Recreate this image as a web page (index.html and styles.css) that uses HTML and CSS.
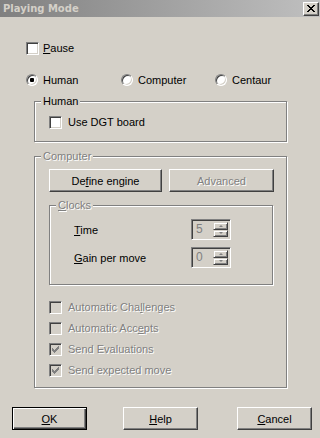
FILE: index.html
```html
<!DOCTYPE html>
<html lang="en">
<head>
    <meta charset="UTF-8">
    <title>Playing Mode</title>
    <link rel="stylesheet" href="styles.css">
</head>
<body>
    <div class="window">
        <div class="titlebar">
            <span class="title">Playing Mode</span>
            <span class="close-btn">
                <svg width="8" height="7" viewBox="0 0 8 7" shape-rendering="crispEdges"><path d="M0 0h2v1h1v1h2V1h1V0h2v1H7v1H6v1H5v1h1v1h1v1h1v1H6V6H5V5H3v1H2v1H0V6h1V5h1V4h1V3H2V2H1V1H0z" fill="#000"/></svg>
            </span>
        </div>

        <div class="content">
            <label class="check pause">
                <span class="box"></span>
                <span><u>P</u>ause</span>
            </label>

            <div class="radio-row">
                <label class="radio"><span class="ring"><span class="dot"></span></span>Human</label>
                <label class="radio"><span class="ring"></span>Computer</label>
                <label class="radio"><span class="ring"></span>Centaur</label>
            </div>

            <fieldset class="group human">
                <legend>Human</legend>
                <div class="group-body">
                    <label class="check">
                        <span class="box"></span>
                        <span>Use DGT board</span>
                    </label>
                </div>
            </fieldset>

            <fieldset class="group computer">
                <legend class="disabled">Computer</legend>
                <div class="group-body">
                    <div class="engine-buttons">
                        <button class="btn engine">De<u>f</u>ine engine</button>
                        <button class="btn advanced disabled">Advanced</button>
                    </div>

                    <fieldset class="group clocks">
                        <legend class="disabled"><u>C</u>locks</legend>
                        <div class="clocks-body">
                            <div class="clock-row">
                                <span class="clock-label"><u>T</u>ime</span>
                                <span class="spin">
                                    <span class="spin-val">5</span>
                                    <span class="spin-btns">
                                        <span class="spin-btn"><span class="arrow up"></span></span>
                                        <span class="spin-btn"><span class="arrow down"></span></span>
                                    </span>
                                </span>
                            </div>
                            <div class="clock-row">
                                <span class="clock-label"><u>G</u>ain per move</span>
                                <span class="spin">
                                    <span class="spin-val">0</span>
                                    <span class="spin-btns">
                                        <span class="spin-btn"><span class="arrow up"></span></span>
                                        <span class="spin-btn"><span class="arrow down"></span></span>
                                    </span>
                                </span>
                            </div>
                        </div>
                    </fieldset>

                    <div class="options">
                        <label class="check">
                            <span class="box off"></span>
                            <span class="disabled">Automatic Cha<u>l</u>lenges</span>
                        </label>
                        <label class="check">
                            <span class="box off"></span>
                            <span class="disabled">Automatic Acc<u>e</u>pts</span>
                        </label>
                        <label class="check">
                            <span class="box off"><svg width="7" height="7" viewBox="0 0 7 7" shape-rendering="crispEdges"><path d="M0 2h1v3H0zM1 3h1v3H1zM2 4h1v3H2zM3 3h1v3H3zM4 2h1v3H4zM5 1h1v3H5zM6 0h1v3H6z" fill="#808080"/></svg></span>
                            <span class="disabled">Send Evaluations</span>
                        </label>
                        <label class="check">
                            <span class="box off"><svg width="7" height="7" viewBox="0 0 7 7" shape-rendering="crispEdges"><path d="M0 2h1v3H0zM1 3h1v3H1zM2 4h1v3H2zM3 3h1v3H3zM4 2h1v3H4zM5 1h1v3H5zM6 0h1v3H6z" fill="#808080"/></svg></span>
                            <span class="disabled">Send expected move</span>
                        </label>
                    </div>
                </div>
            </fieldset>

            <div class="footer">
                <button class="btn default"><u>O</u>K</button>
                <button class="btn help"><u>H</u>elp</button>
                <button class="btn cancel"><u>C</u>ancel</button>
            </div>
        </div>
    </div>
</body>
</html>
```

FILE: styles.css
```css
* {
    box-sizing: border-box;
}
body {
    margin: 0;
    background-color: #d4d0c8; /* 3D face */
    font: 11px "Liberation Sans", Arial, sans-serif;
    color: #000;
}
.window {
    width: 320px;
    height: 438px;
    overflow: hidden;
}
.titlebar {
    height: 17px;
    display: flex;
    align-items: center;
    justify-content: space-between;
    padding: 0 1px 0 3px;
    background: linear-gradient(to right, #808080, #c0c0c0); /* inactive caption */
}
.title {
    font: bold 10px "DejaVu Sans", sans-serif;
    color: #d4d0c8;
}
.close-btn {
    width: 16px;
    height: 14px;
    display: flex;
    align-items: center;
    justify-content: center;
    background-color: #d4d0c8;
    border: 1px solid;
    border-color: #fff #404040 #404040 #fff;
    box-shadow: inset -1px -1px #808080;
}
.content {
    padding: 25px 0 0 26px;
}

/* checkboxes */
.check {
    display: flex;
    align-items: center;
    height: 13px;
    line-height: 13px;
}
.box {
    flex: none;
    width: 13px;
    height: 13px;
    margin-right: 6px;
    display: flex;
    align-items: center;
    justify-content: center;
    background-color: #fff;
    border: 1px solid;
    border-color: #808080 #fff #fff #808080;
    box-shadow: inset 1px 1px #404040, inset -1px -1px #d4d0c8;
}
.box.off {
    background-color: #d4d0c8;
}
.pause .box {
    margin-right: 4px;
}
.disabled {
    color: #808080;
    text-shadow: 1px 1px 0 #fff;
}

/* radios */
.radio-row {
    display: grid;
    grid-template-columns: 95px 94px auto;
    margin-top: 19px;
}
.radio {
    display: flex;
    align-items: center;
    height: 12px;
}
.ring {
    flex: none;
    width: 12px;
    height: 12px;
    margin-right: 5px;
    display: flex;
    align-items: center;
    justify-content: center;
    border-radius: 50%;
    background-color: #fff;
    border: 1px solid;
    border-color: #808080 #fff #fff #808080;
    box-shadow: inset 1px 1px #404040, inset -1px -1px #d4d0c8;
}
.dot {
    width: 4px;
    height: 4px;
    border-radius: 1px;
    background-color: #000;
}

/* group boxes */
.group {
    margin: 0;
    padding: 0;
    min-width: 0;
    border: 1px solid #808080;
    box-shadow: inset 1px 1px #fff, 1px 1px #fff; /* etched */
}
.group legend {
    margin-left: 6px;
    padding: 0 2px;
    line-height: 13px;
    background-color: #d4d0c8;
}
.group-body {
    padding-left: 14px;
}
.human {
    width: 253px;
    margin: 9px 0 0 8px;
    padding: 8px 0 12px;
}
.computer {
    width: 253px;
    margin: 8px 0 0 8px;
    padding: 6px 0 10px;
}
.engine-buttons {
    display: flex;
}
.engine {
    width: 113px;
}
.advanced {
    width: 105px;
    margin-left: 7px;
}
.clocks {
    width: 224px;
    margin-top: 7px;
    padding: 7px 0 16px;
}
.clocks-body {
    padding-left: 24px;
}
.clock-row {
    display: flex;
    align-items: center;
}
.clock-row + .clock-row {
    margin-top: 7px;
}
.clock-label {
    width: 117px;
}

/* spin boxes */
.spin {
    display: flex;
    width: 40px;
    height: 21px;
    padding: 2px;
    background-color: #d4d0c8;
    border: 1px solid;
    border-color: #808080 #fff #fff #808080;
    box-shadow: inset 1px 1px #404040, inset -1px -1px #d4d0c8;
}
.spin-val {
    flex: 1;
    padding-left: 2px;
    line-height: 15px;
    font-size: 12px;
    color: #808080;
}
.spin-btns {
    width: 15px;
    display: flex;
    flex-direction: column;
}
.spin-btn {
    flex: 1;
    display: flex;
    align-items: center;
    justify-content: center;
    border: 1px solid;
    border-color: #d4d0c8 #404040 #404040 #d4d0c8;
    box-shadow: inset 1px 1px #fff, inset -1px -1px #808080;
}
.arrow {
    width: 0;
    height: 0;
    border-left: 2px solid transparent;
    border-right: 2px solid transparent;
}
.arrow.up {
    border-bottom: 2px solid #808080;
}
.arrow.down {
    border-top: 2px solid #808080;
}

.options {
    margin-top: 16px;
}
.options .check + .check {
    margin-top: 8px;
}

/* push buttons */
.btn {
    height: 23px;
    padding: 0;
    font: inherit;
    color: #000;
    background-color: #d4d0c8;
    border: 1px solid;
    border-color: #fff #404040 #404040 #fff;
    box-shadow: inset -1px -1px #808080;
}
.btn.disabled {
    color: #808080;
}
.footer {
    display: flex;
    margin: 19px 0 0 -14px;
}
.footer .btn {
    width: 75px;
}
.btn.default {
    border-color: #000;
    box-shadow: inset 1px 1px #fff, inset -1px -1px #404040, inset -2px -2px #808080;
}
.help {
    margin-left: 36px;
}
.cancel {
    margin-left: 39px;
}
```
